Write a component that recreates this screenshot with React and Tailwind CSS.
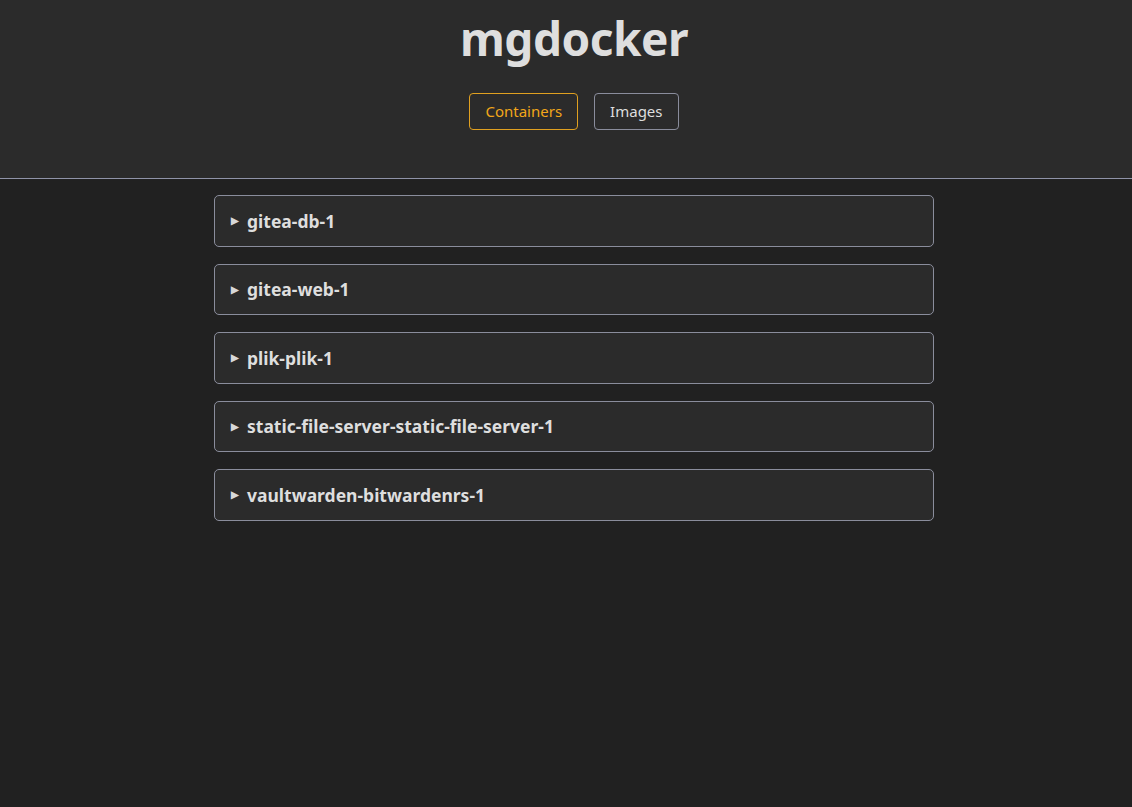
const CONTAINERS = [
  'gitea-db-1',
  'gitea-web-1',
  'plik-plik-1',
  'static-file-server-static-file-server-1',
  'vaultwarden-bitwardenrs-1',
]

export default function App() {
  return (
    <div className="min-h-screen bg-[#212121] text-[#dcdcdc] font-['Noto_Sans','Open_Sans',sans-serif]">
      {/* Header */}
      <header className="h-[179px] bg-[#2b2b2b] border-b border-[#8f93a8] pl-4 flex flex-col items-center">
        <h1 className="mt-[9px] text-[46px] leading-[58px] font-bold tracking-[-0.5px] text-[#dedede]">mgdocker</h1>
        <nav className="mt-[26px] flex gap-4">
          <button className="h-[37px] px-[15px] rounded border border-[#e0a020] text-[#f2a71a] text-[15px]">
            Containers
          </button>
          <button className="h-[37px] px-[15px] rounded border border-[#8a8d9c] text-[#dedede] text-[15px]">
            Images
          </button>
        </nav>
      </header>

      {/* Container list */}
      <main className="pl-4">
        <div className="w-[720px] mx-auto pt-4 flex flex-col gap-[17px]">
          {CONTAINERS.map((name) => (
            <details key={name} className="bg-[#2b2b2b] border border-[#8a8d9c] rounded-[5px]">
              <summary className="h-[49.5px] pl-4 flex items-center gap-2 cursor-pointer list-none text-[17.5px] font-bold text-[#dedede]">
                <span className="text-[10px] text-[#d8d8d8]">▶</span>
                {name}
              </summary>
            </details>
          ))}
        </div>
      </main>
    </div>
  )
}
